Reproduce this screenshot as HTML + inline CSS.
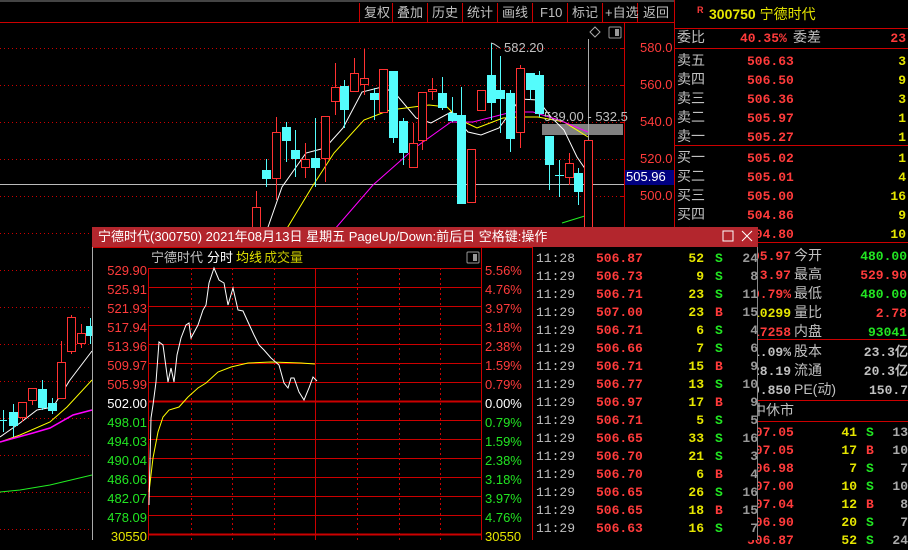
<!DOCTYPE html>
<html><head><meta charset="utf-8"><style>
*{margin:0;padding:0;box-sizing:border-box}
body{width:908px;height:540px;background:#000;overflow:hidden;position:relative;font-family:"Liberation Sans","WenQuanYi Zen Hei",sans-serif;font-size:13px;color:#c8c8c8}
.t{position:absolute;white-space:nowrap;line-height:15px}
.r{color:#ff3b3b}.g{color:#22e522}.y{color:#e6e600}.w{color:#fff}.gr{color:#c0c0c0}.dy{color:#c8c800}
.ra{text-align:right}
.mono{font-family:"Liberation Mono","WenQuanYi Zen Hei",monospace;font-weight:bold}
#pop{position:absolute;left:92px;top:227px;width:666px;height:313px;background:#000;border-left:1px solid #aaa;border-right:1px solid #888}
</style></head><body>
<svg width="908" height="540" style="position:absolute;left:0;top:0">
<line x1="0" y1="1" x2="674" y2="1" stroke="#888"/>
<line x1="0" y1="22.5" x2="674" y2="22.5" stroke="#c00"/>
<g stroke="#c00">
<line x1="359.5" y1="3" x2="359.5" y2="22"/><line x1="392.5" y1="3" x2="392.5" y2="22"/><line x1="427.5" y1="3" x2="427.5" y2="22"/><line x1="462.5" y1="3" x2="462.5" y2="22"/><line x1="497.5" y1="3" x2="497.5" y2="22"/><line x1="532.5" y1="3" x2="532.5" y2="22"/><line x1="567.5" y1="3" x2="567.5" y2="22"/><line x1="602.5" y1="3" x2="602.5" y2="22"/><line x1="637.5" y1="3" x2="637.5" y2="22"/>
</g>
<g stroke="#c00" stroke-dasharray="1,3">
<line x1="0" y1="48.5" x2="620" y2="48.5"/><line x1="0" y1="85.5" x2="620" y2="85.5"/><line x1="0" y1="122.5" x2="620" y2="122.5"/><line x1="0" y1="159.5" x2="620" y2="159.5"/><line x1="0" y1="196.5" x2="620" y2="196.5"/><line x1="0" y1="233.5" x2="620" y2="233.5"/><line x1="0" y1="270.5" x2="620" y2="270.5"/><line x1="0" y1="307.5" x2="620" y2="307.5"/><line x1="0" y1="344.5" x2="620" y2="344.5"/><line x1="0" y1="381.5" x2="620" y2="381.5"/><line x1="0" y1="418.5" x2="620" y2="418.5"/><line x1="0" y1="455.5" x2="620" y2="455.5"/><line x1="0" y1="492.5" x2="620" y2="492.5"/><line x1="0" y1="529.5" x2="620" y2="529.5"/>
</g>
<g stroke="#c00"><line x1="624.5" y1="23" x2="624.5" y2="540"/><line x1="674.5" y1="0" x2="674.5" y2="540"/>
<line x1="620" y1="48.5" x2="624" y2="48.5"/><line x1="620" y1="85.5" x2="624" y2="85.5"/><line x1="620" y1="122.5" x2="624" y2="122.5"/><line x1="620" y1="159.5" x2="624" y2="159.5"/><line x1="620" y1="196.5" x2="624" y2="196.5"/></g>
<line x1="0" y1="184.5" x2="624" y2="184.5" stroke="#bbb"/>
<rect x="625" y="170" width="49" height="15" fill="#000080"/>
<rect x="542" y="124" width="81" height="11" fill="#808080"/>
<line x1="588.5" y1="39" x2="588.5" y2="230" stroke="#aaa"/>
<polyline fill="none" stroke="#fff" points="267,230 282,187 306,153 325,148 343,128 362,92 382,87 395,93 416,118 431,123 451,112 468,132 481,135 499,128 520,99 538,100 551,117 564,130 577,157 588,173"/>
<polyline fill="none" stroke="#ff0" points="286,230 312,187 334,153 364,120 390,110 429,105 447,107 460,120 477,128 503,118 520,117 538,117 564,122 588,137"/>
<polyline fill="none" stroke="#f0f" points="334,230 373,185 416,147 451,122 473,122 512,112 533,112 559,120 588,132"/>
<polyline fill="none" stroke="#2e2" points="562,223 588,215"/>
<polyline fill="none" stroke="#fff" points="0,437 20,423 37,410 53,407 70,380 92,351"/>
<polyline fill="none" stroke="#ff0" points="0,442 20,435 50,422 67,407 92,380"/>
<polyline fill="none" stroke="#f0f" stroke-width="1.5" points="0,442 33,433 50,428 73,415 92,410"/>
<polyline fill="none" stroke="#2e2" points="0,492 20,490 50,485 92,475"/>
<g stroke-width="1">
<g stroke="#ff3232" fill="#000">
<line x1="256.5" y1="191" x2="256.5" y2="232"/><rect x="252.5" y="207.5" width="8" height="25"/>
<line x1="276.5" y1="117" x2="276.5" y2="200"/><rect x="272.5" y="132.5" width="8" height="46"/>
<line x1="305.5" y1="143" x2="305.5" y2="178"/><rect x="301.5" y="159.5" width="8" height="8"/>
<line x1="325.5" y1="116" x2="325.5" y2="182"/><rect x="321.5" y="116.5" width="8" height="42"/>
<line x1="335.5" y1="63" x2="335.5" y2="115"/><rect x="331.5" y="87.5" width="8" height="14"/>
<line x1="354.5" y1="58" x2="354.5" y2="92"/><rect x="350.5" y="73.5" width="8" height="18"/>
<line x1="364.5" y1="49" x2="364.5" y2="95"/><rect x="360.5" y="78.5" width="8" height="6"/>
<rect x="379.5" y="69.5" width="8" height="43"/>
<line x1="413.5" y1="123" x2="413.5" y2="167"/><rect x="409.5" y="143.5" width="8" height="24"/>
<line x1="422.5" y1="92" x2="422.5" y2="150"/><rect x="418.5" y="92.5" width="8" height="48"/>
<line x1="432.5" y1="78" x2="432.5" y2="100"/><rect x="428.5" y="89.5" width="8" height="2"/>
<rect x="467.5" y="149.5" width="8" height="53"/>
<rect x="477.5" y="90.5" width="8" height="20"/>
<line x1="520.5" y1="65" x2="520.5" y2="148"/><rect x="516.5" y="68.5" width="8" height="64"/>
<line x1="569.5" y1="153" x2="569.5" y2="185"/><rect x="565.5" y="163.5" width="8" height="14"/>
<rect x="584.5" y="140.5" width="8" height="90"/>
<line x1="22.5" y1="402" x2="22.5" y2="422"/><rect x="18.5" y="402.5" width="8" height="15"/>
<rect x="28.5" y="388.5" width="8" height="12"/><line x1="32.5" y1="400" x2="32.5" y2="405"/>
<line x1="61.5" y1="341" x2="61.5" y2="398"/><rect x="57.5" y="362.5" width="8" height="36"/>
<line x1="71.5" y1="315" x2="71.5" y2="354"/><rect x="67.5" y="317.5" width="8" height="34"/>
<line x1="81.5" y1="324" x2="81.5" y2="348"/><rect x="77.5" y="333.5" width="8" height="10"/>
</g>
<g stroke="#54fcfc" fill="#54fcfc">
<line x1="266.5" y1="159" x2="266.5" y2="187"/><rect x="262.5" y="170.5" width="8" height="8"/>
<line x1="286.5" y1="122" x2="286.5" y2="162"/><rect x="282.5" y="127.5" width="8" height="13"/>
<line x1="295.5" y1="130" x2="295.5" y2="177"/><rect x="291.5" y="150.5" width="8" height="8"/>
<line x1="315.5" y1="118" x2="315.5" y2="187"/><rect x="311.5" y="158.5" width="8" height="9"/>
<line x1="344.5" y1="80" x2="344.5" y2="128"/><rect x="340.5" y="86.5" width="8" height="23"/>
<line x1="374.5" y1="88" x2="374.5" y2="120"/><rect x="370.5" y="93.5" width="8" height="6"/>
<line x1="393.5" y1="71" x2="393.5" y2="143"/><rect x="389.5" y="71.5" width="8" height="66"/>
<line x1="403.5" y1="118" x2="403.5" y2="165"/><rect x="399.5" y="121.5" width="8" height="31"/>
<line x1="442.5" y1="77" x2="442.5" y2="110"/><rect x="438.5" y="93.5" width="8" height="14"/>
<line x1="452.5" y1="97" x2="452.5" y2="122"/><rect x="448.5" y="113.5" width="8" height="7"/>
<line x1="461.5" y1="87" x2="461.5" y2="203"/><rect x="457.5" y="115.5" width="8" height="88"/>
<line x1="491.5" y1="43" x2="491.5" y2="120"/><rect x="487.5" y="75.5" width="8" height="27"/>
<line x1="500.5" y1="56" x2="500.5" y2="133"/><rect x="496.5" y="90.5" width="8" height="8"/>
<line x1="510.5" y1="90" x2="510.5" y2="152"/><rect x="506.5" y="93.5" width="8" height="45"/>
<line x1="530.5" y1="73" x2="530.5" y2="100"/><rect x="526.5" y="73.5" width="8" height="16"/>
<line x1="539.5" y1="71" x2="539.5" y2="117"/><rect x="535.5" y="75.5" width="8" height="38"/>
<line x1="549.5" y1="136" x2="549.5" y2="190"/><rect x="545.5" y="136.5" width="8" height="28"/>
<line x1="559.5" y1="160" x2="559.5" y2="197"/><line x1="555" y1="175.5" x2="564" y2="175.5"/>
<line x1="578.5" y1="168" x2="578.5" y2="205"/><rect x="574.5" y="173.5" width="8" height="18"/>
<line x1="3.5" y1="410" x2="3.5" y2="432"/><line x1="0" y1="420.5" x2="7" y2="420.5"/>
<line x1="13.5" y1="404" x2="13.5" y2="437"/><rect x="9.5" y="412.5" width="8" height="13"/>
<line x1="42.5" y1="380" x2="42.5" y2="410"/><rect x="38.5" y="389.5" width="8" height="18"/>
<line x1="52.5" y1="398" x2="52.5" y2="414"/><rect x="48.5" y="403.5" width="8" height="7"/>
<line x1="90.5" y1="318" x2="90.5" y2="344"/><rect x="86.5" y="326.5" width="6" height="9"/>
</g></g>
<polyline fill="none" stroke="#ccc" points="491,43 494,44 500,48"/>
<path d="M595 27 l5 5 -5 5 -5 -5z" fill="none" stroke="#aaa"/>
<rect x="609" y="27" width="12" height="11" fill="none" stroke="#999" rx="1"/><rect x="615" y="29" width="4" height="7" fill="#999"/>
<g stroke="#c00"><line x1="675" y1="28.5" x2="908" y2="28.5"/><line x1="675" y1="48.5" x2="908" y2="48.5"/><line x1="675" y1="145.5" x2="908" y2="145.5"/><line x1="675" y1="242.5" x2="908" y2="242.5"/><line x1="675" y1="339.5" x2="908" y2="339.5"/><line x1="675" y1="400.5" x2="908" y2="400.5"/><line x1="675" y1="421.5" x2="908" y2="421.5"/></g>
</svg>
<div class="t gr" style="left:364px;top:5px">复权</div><div class="t gr" style="left:397px;top:5px">叠加</div><div class="t gr" style="left:432px;top:5px">历史</div><div class="t gr" style="left:467px;top:5px">统计</div><div class="t gr" style="left:502px;top:5px">画线</div><div class="t gr" style="left:540px;top:5px">F10</div><div class="t gr" style="left:572px;top:5px">标记</div><div class="t gr" style="left:605px;top:5px">+自选</div><div class="t gr" style="left:643px;top:5px">返回</div>
<div class="t r" style="left:640px;top:40px">580.0</div><div class="t r" style="left:640px;top:77px">560.0</div><div class="t r" style="left:640px;top:114px">540.0</div><div class="t r" style="left:640px;top:151px">520.0</div><div class="t r" style="left:640px;top:188px">500.0</div>
<div class="t w" style="left:626px;top:169px">505.96</div>
<div class="t gr" style="left:504px;top:40px">582.20</div>
<div class="t gr" style="left:544px;top:109px">539.00 - 532.5</div>
<div class="t r" style="left:697px;top:3px;font-size:9px;font-weight:bold">R</div>
<div class="t y" style="left:709px;top:7px;font-size:14px;font-weight:bold">300750 <span style="font-weight:normal">宁德时代</span></div>
<div class="t gr" style="left:677px;top:30px;font-size:14px">委比</div><div class="t r mono" style="left:740px;top:31px">40.35%</div><div class="t gr" style="left:793px;top:30px;font-size:14px">委差</div><div class="t r mono ra" style="left:850px;width:56px;top:31px">23</div>
<div class="t gr" style="left:677px;top:51px;font-size:14px;line-height:19px">卖五<br>卖四<br>卖三<br>卖二<br>卖一</div>
<div class="t r mono" style="left:747px;top:52px;line-height:19px">506.63<br>506.50<br>506.36<br>505.97<br>505.27</div>
<div class="t y mono ra" style="left:850px;width:56px;top:52px;line-height:19px">3<br>9<br>3<br>1<br>1</div>
<div class="t gr" style="left:677px;top:148px;font-size:14px;line-height:19px">买一<br>买二<br>买三<br>买四<br>买五</div>
<div class="t r mono" style="left:747px;top:149px;line-height:19px">505.02<br>505.01<br>505.00<br>504.86<br>504.80</div>
<div class="t y mono ra" style="left:850px;width:56px;top:149px;line-height:19px">1<br>4<br>16<br>9<br>10</div>
<div class="t gr" style="left:677px;top:246px;font-size:14px;line-height:19px">现价<br>涨跌<br>涨幅<br>总量<br>外盘</div>
<div class="t mono ra" style="left:700px;width:91px;top:247px;line-height:19px"><span class="r">505.97</span><br><span class="r">3.97</span><br><span class="r">0.79%</span><br><span class="y">110299</span><br><span class="r">17258</span></div>
<div class="t gr" style="left:794px;top:246px;font-size:14px;line-height:19px">今开<br>最高<br>最低<br>量比<br>内盘</div>
<div class="t mono ra" style="left:830px;width:77px;top:247px;line-height:19px"><span class="g">480.00</span><br><span class="r">529.90</span><br><span class="g">480.00</span><br><span class="r">2.78</span><br><span class="g">93041</span></div>
<div class="t mono gr ra" style="left:700px;width:91px;top:343px;line-height:19px">1.09%<br>128.19<br>0.850</div>
<div class="t gr" style="left:794px;top:342px;font-size:14px;line-height:19px">股本<br>流通<br>PE(动)</div>
<div class="t mono gr ra" style="left:830px;width:78px;top:343px;line-height:19px">23.3亿<br>20.3亿<br>150.7</div>
<div class="t gr" style="left:738px;top:403px;font-size:14px">盘中休市</div>
<div class="t r mono" style="left:747px;top:424px;line-height:18px">507.05<br>507.05<br>506.98<br>507.00<br>507.04<br>506.90<br>506.87</div>
<div class="t y mono ra" style="left:820px;width:37px;top:424px;line-height:18px">41<br>17<br>7<br>10<br>12<br>20<br>52</div>
<div class="t mono" style="left:866px;top:424px;line-height:18px"><span class="g">S</span><br><span class="r">B</span><br><span class="g">S</span><br><span class="g">S</span><br><span class="r">B</span><br><span class="g">S</span><br><span class="g">S</span></div>
<div class="t mono gr ra" style="left:870px;width:38px;top:424px;line-height:18px;color:#aaa">13<br>10<br>7<br>10<br>8<br>7<br>24</div>
<div id="pop">
<div style="position:absolute;left:-1px;top:0;width:666px;height:20px;background:#b3262d"></div>
<div class="t w" style="left:5px;top:2px;font-size:13px">宁德时代(300750) 2021年08月13日 星期五 PageUp/Down:前后日 空格键:操作</div>
<svg width="666" height="313" style="position:absolute;left:-1px;top:0">
<rect x="631" y="4" width="10" height="10" fill="none" stroke="#fff"/>
<path d="M650 4 l10 10 M660 4 l-10 10" stroke="#fff"/>
<g stroke="#c00"><line x1="1" y1="20.5" x2="440" y2="20.5"/><line x1="440.5" y1="20" x2="440.5" y2="313"/></g>
<g stroke="#c00" stroke-dasharray="2,3"><line x1="99.5" y1="41" x2="99.5" y2="313"/><line x1="140.5" y1="41" x2="140.5" y2="313"/><line x1="182.5" y1="41" x2="182.5" y2="313"/><line x1="265.5" y1="41" x2="265.5" y2="313"/><line x1="307.5" y1="41" x2="307.5" y2="313"/><line x1="348.5" y1="41" x2="348.5" y2="313"/></g>
<g stroke="#c00"><line x1="56.5" y1="41" x2="56.5" y2="313"/><line x1="223.5" y1="41" x2="223.5" y2="313"/><line x1="389.5" y1="20" x2="389.5" y2="313"/>
<line x1="56" y1="41.5" x2="390" y2="41.5"/><line x1="56" y1="60.5" x2="390" y2="60.5"/><line x1="56" y1="79.5" x2="390" y2="79.5"/><line x1="56" y1="98.5" x2="390" y2="98.5"/><line x1="56" y1="117.5" x2="390" y2="117.5"/><line x1="56" y1="136.5" x2="390" y2="136.5"/><line x1="56" y1="155.5" x2="390" y2="155.5"/><line x1="56" y1="174.5" x2="390" y2="174.5" stroke-width="2"/><line x1="56" y1="193.5" x2="390" y2="193.5"/><line x1="56" y1="212.5" x2="390" y2="212.5"/><line x1="56" y1="231.5" x2="390" y2="231.5"/><line x1="56" y1="250.5" x2="390" y2="250.5"/><line x1="56" y1="269.5" x2="390" y2="269.5"/><line x1="56" y1="288.5" x2="390" y2="288.5"/><line x1="56" y1="307.5" x2="390" y2="307.5" stroke-width="2"/></g>
<g transform="translate(-91,-227)">
<polyline fill="none" stroke="#ff0" points="148,492 152,458 157,432 162,417 168,410 178,407 187,397 197,388 205,383 217,372 230,367 247,363 270,362 300,363 314,364"/>
<polyline fill="none" stroke="#fff" points="148,505 150,418 152,405 155,382 158,342 162,345 167,382 170,368 173,382 176,355 180,338 185,325 188,323 190,338 197,325 202,310 205,305 208,283 213,268 218,280 223,283 227,305 232,288 237,310 242,311 247,322 253,335 258,345 263,350 270,358 278,365 283,383 287,388 290,378 293,378 298,392 303,400 308,388 312,377 316,381"/>
</g>
<rect x="375" y="25" width="12" height="11" fill="none" stroke="#999" rx="1"/><rect x="381" y="27" width="4" height="7" fill="#999"/>
</svg>
<div class="t gr" style="left:58px;top:23px">宁德时代</div><div class="t w" style="left:114px;top:23px">分时</div><div class="t y" style="left:143px;top:23px">均线</div><div class="t dy" style="left:171px;top:23px">成交量</div>
<div class="t ra" style="left:0;width:54px;top:34px;line-height:19px"><span class="r">529.90<br>525.91<br>521.93<br>517.94<br>513.96<br>509.97<br>505.99</span><br><span class="w">502.00</span><br><span class="g">498.01<br>494.03<br>490.04<br>486.06<br>482.07<br>478.09</span><br><span class="y">30550</span></div>
<div class="t" style="left:392px;top:34px;line-height:19px"><span class="r">5.56%<br>4.76%<br>3.97%<br>3.18%<br>2.38%<br>1.59%<br>0.79%</span><br><span class="w">0.00%</span><br><span class="g">0.79%<br>1.59%<br>2.38%<br>3.18%<br>3.97%<br>4.76%</span><br><span class="y">30550</span></div>
<div class="t mono gr" style="left:443px;top:23px;line-height:18px;font-weight:normal">11:28<br>11:29<br>11:29<br>11:29<br>11:29<br>11:29<br>11:29<br>11:29<br>11:29<br>11:29<br>11:29<br>11:29<br>11:29<br>11:29<br>11:29<br>11:29</div>
<div class="t mono r" style="left:503px;top:23px;line-height:18px">506.87<br>506.73<br>506.71<br>507.00<br>506.71<br>506.66<br>506.71<br>506.77<br>506.97<br>506.71<br>506.65<br>506.70<br>506.70<br>506.65<br>506.65<br>506.63</div>
<div class="t mono y ra" style="left:580px;width:31px;top:23px;line-height:18px">52<br>9<br>23<br>23<br>6<br>7<br>15<br>13<br>17<br>5<br>33<br>21<br>6<br>26<br>18<br>16</div>
<div class="t mono" style="left:622px;top:23px;line-height:18px"><span class="g">S</span><br><span class="g">S</span><br><span class="g">S</span><br><span class="r">B</span><br><span class="g">S</span><br><span class="g">S</span><br><span class="r">B</span><br><span class="g">S</span><br><span class="r">B</span><br><span class="g">S</span><br><span class="g">S</span><br><span class="g">S</span><br><span class="r">B</span><br><span class="g">S</span><br><span class="r">B</span><br><span class="g">S</span></div>
<div style="position:absolute;left:630px;top:20px;width:35px;height:293px;overflow:hidden"><div class="t mono ra" style="right:0;top:3px;line-height:18px;color:#999">24<br>8<br>11<br>15<br>4<br>6<br>9<br>10<br>9<br>5<br>16<br>3<br>4<br>16<br>15<br>7</div></div>
</div>
</body></html>
